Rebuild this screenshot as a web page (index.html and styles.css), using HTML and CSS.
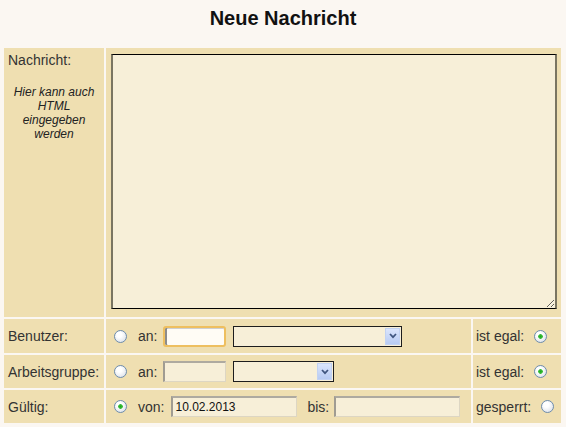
FILE: index.html
```html
<!DOCTYPE html>
<html lang="de">
<head>
<meta charset="utf-8">
<title>Neue Nachricht</title>
<link rel="stylesheet" href="styles.css">
</head>
<body>
<div class="title">Neue Nachricht</div>
<table class="form">
  <colgroup>
    <col class="c1">
    <col class="c2">
    <col class="c3">
  </colgroup>
  <tr>
    <td class="label top">
      <div>Nachricht:</div>
      <div class="hint">Hier kann auch HTML eingegeben werden</div>
    </td>
    <td colspan="2" class="msg"><textarea class="area"></textarea></td>
  </tr>
  <tr class="r2">
    <td class="label">Benutzer:</td>
    <td>
      <div class="line">
        <input type="radio" class="radio" name="u1">
        <span class="lbl">an:</span>
        <input type="text" class="txt focus">
        <div class="select wide"><span class="btn"><svg width="8" height="6" viewBox="0 0 8 6"><polyline points="1,1 4,4.2 7,1" fill="none" stroke="#3f557f" stroke-width="1.7"/></svg></span></div>
      </div>
    </td>
    <td class="right"><div class="line"><span>ist egal:</span><input type="radio" class="radio end" name="u2" checked></div></td>
  </tr>
  <tr class="r3">
    <td class="label">Arbeitsgruppe:</td>
    <td>
      <div class="line">
        <input type="radio" class="radio" name="g1">
        <span class="lbl">an:</span>
        <input type="text" class="txt plain">
        <div class="select narrow"><span class="btn"><svg width="8" height="6" viewBox="0 0 8 6"><polyline points="1,1 4,4.2 7,1" fill="none" stroke="#3f557f" stroke-width="1.7"/></svg></span></div>
      </div>
    </td>
    <td class="right"><div class="line"><span>ist egal:</span><input type="radio" class="radio end" name="g2" checked></div></td>
  </tr>
  <tr class="r3">
    <td class="label">Gültig:</td>
    <td>
      <div class="line">
        <input type="radio" class="radio" name="v1" checked>
        <span class="lbl">von:</span>
        <input type="text" class="txt plain date" value="10.02.2013">
        <span class="lbl bis">bis:</span>
        <input type="text" class="txt plain date2">
      </div>
    </td>
    <td class="right"><div class="line"><span>gesperrt:</span><input type="radio" class="radio end" name="v2"></div></td>
  </tr>
</table>
</body>
</html>
```

FILE: styles.css
```css
body {
  margin: 0;
  background: #fbf7f2;
  font-family: "Liberation Sans", Arial, sans-serif;
  color: #333;
}

.title {
  text-align: center;
  font-weight: bold;
  font-size: 20px;
  line-height: 23px;
  height: 39px;
  padding-top: 7px;
  color: #111;
}

.form {
  border-collapse: separate;
  border-spacing: 2px;
  margin-left: 2px;
  width: 561px;
  table-layout: fixed;
}

.c1 { width: 100px; }
.c2 { width: 365px; }
.c3 { width: 88px; }

.form td {
  background: #efdfb1;
  padding: 0;
  font-size: 14px;
  vertical-align: middle;
}

.form td.label {
  padding-left: 4px;
  white-space: nowrap;
}

.form td.top {
  vertical-align: top;
  padding-top: 4px;
  line-height: 16px;
}

.hint {
  margin-top: 17px;
  padding-right: 4px;
  font-size: 12px;
  font-style: italic;
  line-height: 14px;
  text-align: center;
  white-space: normal;
  color: #222;
}

.form td.msg {
  padding: 6px 0 8px 0;
}

.area {
  display: block;
  box-sizing: border-box;
  width: 446px;
  height: 255px;
  margin: 0 0 0 5px;
  background: #f7efd8;
  border-top: 1px solid #000;
  border-bottom: 1px solid #000;
  border-left: 2px solid #7a7561;
  border-right: 2px solid #7a7561;
  padding: 2px;
  font-family: "Liberation Sans", Arial, sans-serif;
  font-size: 12px;
}

.r2 td { height: 34px; }
.r3 td { height: 33px; }

.line {
  display: flex;
  align-items: center;
}

.radio {
  appearance: none;
  -webkit-appearance: none;
  box-sizing: border-box;
  width: 13px;
  height: 13px;
  margin: 0 0 0 8px;
  border: 1px solid #6d8cad;
  border-radius: 50%;
  background: radial-gradient(circle at 40% 35%, #ffffff 25%, #d3d9e3 100%);
  flex: none;
}

.radio:checked {
  background:
    radial-gradient(circle, #1fa51f 0, #3cbf3c 2px, rgba(255,255,255,0) 2.6px),
    radial-gradient(circle at 40% 35%, #ffffff 25%, #d3d9e3 100%);
}

.radio.end {
  margin-left: 10px;
}

.lbl {
  margin-left: 11px;
}

.lbl.bis {
  margin-left: 10px;
}

.txt {
  box-sizing: border-box;
  height: 21px;
  margin: 0;
  padding: 0 2px;
  font-family: "Liberation Sans", Arial, sans-serif;
  font-size: 12px;
  color: #111;
  outline: none;
}

.txt.focus {
  width: 63px;
  margin-left: 6px;
  background: #fffcf5;
  border: 2px solid #eebf5f;
  border-radius: 3px;
  box-shadow: inset 2px 0 0 #8c8c8c, inset 0 1px 0 #cfcfcf;
}

.txt.plain {
  width: 63px;
  margin-left: 6px;
  background: #f7efd8;
  border-style: solid;
  border-width: 2px 1px 1px 2px;
  border-color: #aeaaa0 #ddd6c3 #ddd6c3 #a09c92;
}

.txt.date {
  width: 126px;
  margin-left: 7px;
}

.txt.date2 {
  width: 126px;
  margin-left: 5px;
}

.select {
  box-sizing: border-box;
  height: 21px;
  margin-left: 7px;
  border: 1px solid #1d1d1d;
  background: #f7efd8;
  display: flex;
  justify-content: flex-end;
  align-items: center;
  padding-right: 1px;
}

.select.wide { width: 169px; }
.select.narrow { width: 101px; }

.btn {
  box-sizing: border-box;
  width: 15px;
  height: 17px;
  background: linear-gradient(#dbe5fc, #b7cbf3);
  border: 1px solid #c2d2f2;
  display: flex;
  align-items: center;
  justify-content: center;
}

.btn svg { display: block; }

.form td.right {
  padding-left: 3px;
  white-space: nowrap;
}
```
